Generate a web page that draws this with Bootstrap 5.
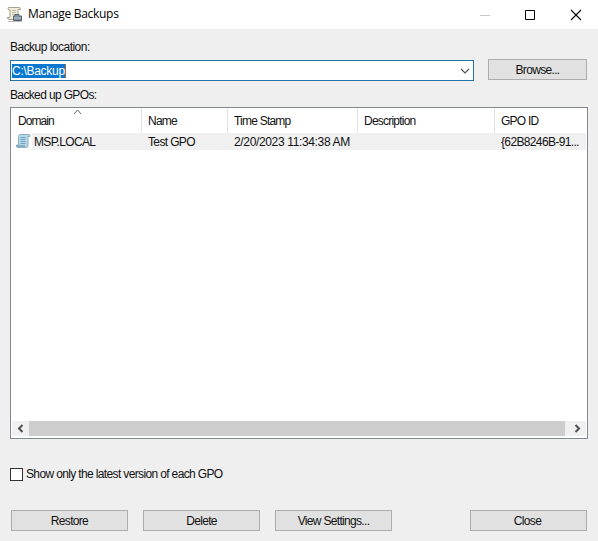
<!DOCTYPE html>
<html lang="en">
<head>
<meta charset="utf-8">
<meta name="viewport" content="width=device-width, initial-scale=1">
<title>Manage Backups</title>
<link href="https://cdn.jsdelivr.net/npm/bootstrap@5.3.0/dist/css/bootstrap.min.css" rel="stylesheet">
<style>
body{width:598px;height:541px;overflow:hidden;background:#efefef;color:#111;font:12px/16px "Liberation Sans",Arial,sans-serif;letter-spacing:-.64px}
.titlebar{height:29px;padding-left:7px;padding-right:16px}
.title-text{font:12px/16px "Open Sans","Noto Sans",sans-serif;letter-spacing:-.3px;color:#000;margin-left:5px;margin-top:-2px}
.content{padding:10px 10px 0}
.location-label{letter-spacing:-.52px;margin-bottom:5px}
.combo{width:464px;height:21px;border:1px solid #2474a8;background:#fff;padding:0 3px 0 1px}
.combo-value{background:#0a78d0;color:#fff;height:14px;line-height:14px;border-right:1px solid #a86c38;letter-spacing:-.28px}
.list-label{margin:6px 0 4px}
.win-btn,.win-btn:hover{width:117px;height:21px;padding:0;border:1px solid #adadad;border-radius:0;background:#e1e1e1;color:#111;font-size:12px;line-height:18px;letter-spacing:-.68px}
.win-btn.browse{width:99px;margin-right:1px;margin-top:-1px}
.win-btn.close-btn{padding-right:2px}
.list-view{height:332px;border:1px solid #828790;background:#fff;width:578px}
.columns{display:grid;grid-template-columns:131px 86px 130px 137px 1fr}
.heads{height:25px;letter-spacing:-.78px}
.heads>div{border-right:1px solid #e3e3e3;padding:5px 0 0 6px}
.heads>div:last-child{border:0}
.heads>div:first-child{padding-left:7px;letter-spacing:-.95px}
.entry{height:17px;margin:0 1px 0 21px;background:#f0f0f0;grid-template-columns:110px 86px 130px 137px 1fr}
.entry>div{padding-left:6px;line-height:18px;white-space:nowrap}
.entry>div:first-child{padding-left:2px}
.entry>.stamp{letter-spacing:-.35px}
.row-icon{margin-left:4px}
.sort-mark{position:absolute;left:62px;top:1px}
.scroll-track{height:15px;margin:0 1px 2px;background:#f0f0f0}
.thumb{background:#cdcdcd;width:536px;height:15px;margin-left:17px}
.latest{margin-top:27px}
.form-check-input.tick-box[type=checkbox]{appearance:none;width:13px;height:13px;border:1px solid #333;border-radius:0;background:#fff;margin:0 3px 0 0}
.actions{margin:28px 1px 0;gap:15px}
</style>
</head>
<body>
<header class="titlebar bg-white d-flex align-items-center">
<svg width="16" height="17" viewBox="0 0 16 17"><path d="M3 1.500h9q1.500 0 1.500 2h-2.500v10H2q-1.500 0-1.500-2H3V4Q1 4 1 2.500T3 1.500Z" fill="#f2edda" stroke="#a8a18e"/><path d="M5 4.500h4M5 6.500h4M5 8.500h3" stroke="#c0b9a2"/><path d="M8 10V8.500h4V10h2.500v4.500H6.500V10Z" fill="#8593a0" stroke="#566471"/><path d="M7 12h7" stroke="#bcc9d1"/><path d="M1 15.500h14" stroke="#bbb"/></svg>
<div class="title-text">Manage Backups</div>
<svg class="ms-auto" width="102" height="12" viewBox="0 0 102 12" fill="none"><path d="M0 6.500h10" stroke="#c8c8c8"/><path d="M45.500 1.500h9v9h-9z" stroke="#000"/><path d="m91 1 10 10M101 1 91 11" stroke="#000" stroke-width="1.100"/></svg>
</header>
<main class="content">
<div class="location-label">Backup location:</div>
<div class="d-flex justify-content-between">
<div class="combo d-flex align-items-center justify-content-between"><span class="combo-value">C:\Backup</span><svg width="10" height="6" viewBox="0 0 10 6" fill="none"><path d="m1 1 4 4 4-4" stroke="#555" stroke-width="1.200"/></svg></div>
<button class="btn win-btn browse">Browse...</button>
</div>
<div class="list-label">Backed up GPOs:</div>
<section class="list-view d-flex flex-column position-relative">
<svg class="sort-mark" width="9" height="6" viewBox="0 0 9 6" fill="none"><path d="m1 5 3.500-4L8 5" stroke="#666"/></svg>
<div class="columns heads"><div>Domain</div><div>Name</div><div>Time Stamp</div><div>Description</div><div>GPO ID</div></div>
<div class="position-relative">
<svg class="row-icon position-absolute" width="16" height="16" viewBox="0 0 16 16"><path d="M4.500 1.500H14q1.500 0 1 2H13v9q0 2-2 2H2.500Q1 14.500 1.300 12H3.500V3.500Q3.500 2 4.500 1.500Z" fill="#b7d8e7" stroke="#8fb0c0"/><path d="M5.500 4.500h5M5.500 6.500h5M5.500 8.500h5M5.500 10.500h5" stroke="#6fa3c2"/><path d="M2 13h8" stroke="#55809a"/></svg>
<div class="columns entry"><div>MSP.LOCAL</div><div>Test GPO</div><div class="stamp">2/20/2023 11:34:38 AM</div><div></div><div>{62B8246B-91...</div></div>
</div>
<div class="scroll-track d-flex align-items-center mt-auto position-relative">
<svg class="position-absolute start-0" width="17" height="15" viewBox="0 0 17 15" fill="none"><path d="M10.500 4 7 7.500l3.500 3.500" stroke="#505050" stroke-width="2"/></svg>
<div class="thumb"></div>
<svg class="position-absolute end-0" width="17" height="15" viewBox="0 0 17 15" fill="none"><path d="M6.500 4 10 7.500 6.500 11" stroke="#505050" stroke-width="2"/></svg>
</div>
</section>
<label class="latest d-flex align-items-center"><input type="checkbox" class="form-check-input tick-box"><span>Show only the latest version of each GPO</span></label>
<footer class="actions d-flex"><button class="btn win-btn">Restore</button><button class="btn win-btn">Delete</button><button class="btn win-btn">View Settings...</button><button class="btn win-btn close-btn ms-auto">Close</button></footer>
</main>
<script src="https://cdn.jsdelivr.net/npm/bootstrap@5.3.0/dist/js/bootstrap.bundle.min.js"></script>
</body>
</html>
